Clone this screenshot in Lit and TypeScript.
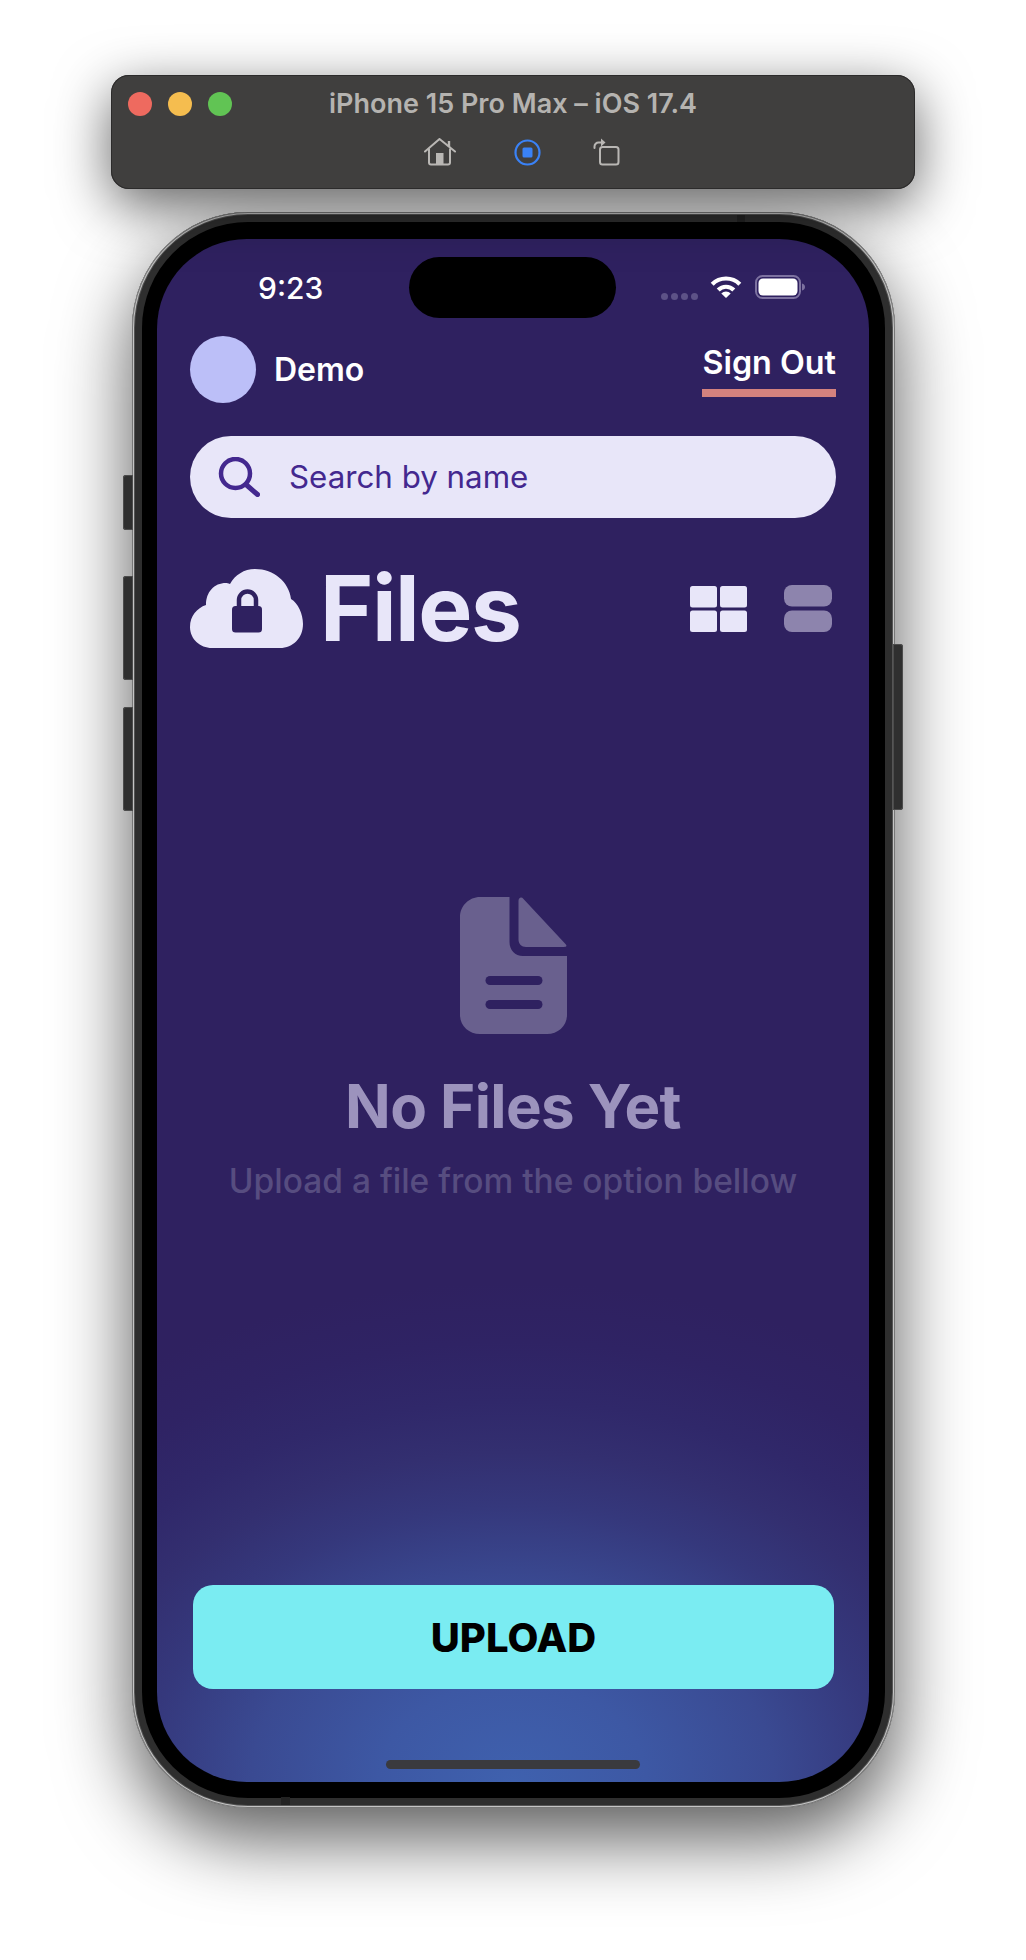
import { LitElement, html, css } from 'lit'
import { customElement } from 'lit/decorators.js'

const homeIcon = html`<svg width="32" height="28" viewBox="0 0 32 28" fill="none" stroke="#b9b7b4" stroke-width="2" stroke-linejoin="round">
  <path d="M1 13.5 15.5 1 31 13.5" stroke-linecap="round"/>
  <path d="M5 10.5V24.5a2 2 0 0 0 2 2H24a2 2 0 0 0 2-2V10.5"/>
  <path d="M25 3v6" stroke-width="2.4"/>
  <rect x="12" y="15" width="7.5" height="12" fill="#b9b7b4" stroke="none"/>
</svg>`

const recordIcon = html`<svg width="27" height="27" viewBox="0 0 27 27">
  <circle cx="13.5" cy="13.5" r="12" fill="none" stroke="#3a82f6" stroke-width="2.2"/>
  <rect x="8.5" y="8.5" width="10" height="10" rx="1.5" fill="#3a82f6"/>
</svg>`

const rotateIcon = html`<svg width="27" height="28" viewBox="0 0 27 28" fill="none" stroke="#b9b7b4" stroke-width="2">
  <rect x="7" y="9" width="18.5" height="17.5" rx="2.5"/>
  <path d="M1.5 10V8.5a4 4 0 0 1 4-4H9" stroke-linecap="round"/>
  <path d="M8 0.5 12.5 4.5 8 8.5Z" fill="#b9b7b4" stroke="none"/>
</svg>`

const wifiIcon = html`<svg width="32" height="22" viewBox="0 0 32 22" fill="none" stroke="#fff">
  <path d="M2.2 8.2A19.5 19.5 0 0 1 29.8 8.2" stroke-width="4.2"/>
  <path d="M8.2 14A11 11 0 0 1 23.8 14" stroke-width="4.2"/>
  <path d="M16 22 11.3 17.4A6.6 6.6 0 0 1 20.7 17.4Z" fill="#fff" stroke="none"/>
</svg>`

const batteryIcon = html`<svg width="50" height="24" viewBox="0 0 50 24">
  <rect x="1" y="1" width="44" height="22" rx="6.5" fill="none" stroke="#7d72a0" stroke-width="2"/>
  <rect x="3.5" y="3.5" width="39" height="17" rx="4.5" fill="#fff"/>
  <path d="M47 8.5c1.8.5 3 1.8 3 3.5s-1.200 3-3 3.500Z" fill="#7d72a0"/>
</svg>`

const searchIcon = html`<svg width="42" height="40" viewBox="0 0 42 40" fill="none" stroke="#43288f" stroke-linecap="round">
  <circle cx="17.500" cy="16.500" r="14.500" stroke-width="4.500"/>
  <path d="M28 27.500 39.500 37.500" stroke-width="5"/>
</svg>`

const cloudIcon = html`<svg width="113" height="79" viewBox="0 0 113 79">
  <path fill="#e8e6f9" d="M22 79C10 79 0 70 0 58C0 47 7 39 16 36C16 23 24 14 36 14C37 14 38 14 40 15C45 6 54 0 65 0C84 0 99 13 101 30C108 34 113 45 113 55C113 69 103 79 90 79Z"/>
  <path fill="none" stroke="#2f2160" stroke-width="4.500" d="M49 40V31a8.500 8.500 0 0 1 17 0V40"/>
  <rect x="42" y="37" width="30" height="26.500" rx="3.500" fill="#2f2160"/>
</svg>`

const gridIcon = html`<svg class="view-icon" width="57" height="46" viewBox="0 0 57 46" fill="#e8e6f9">
  <rect width="27" height="21.500" rx="2.500"/>
  <rect x="30" width="27" height="21.500" rx="2.500"/>
  <rect y="24.500" width="27" height="21.500" rx="2.500"/>
  <rect x="30" y="24.500" width="27" height="21.500" rx="2.500"/>
</svg>`

const listIcon = html`<svg class="view-icon" width="48" height="47" viewBox="0 0 48 47" fill="#8d84ad">
  <rect width="48" height="21.500" rx="8"/>
  <rect y="25.500" width="48" height="21.500" rx="8"/>
</svg>`

const fileIcon = html`<svg width="107" height="137" viewBox="0 0 107 137" fill="#69608e">
  <path d="M58.500 4C58.500 .5 61.500 -.5 63.500 2L105 46.500C107.500 49 106.500 50 104 50H66C61.500 50 58.500 47 58.500 42.500Z"/>
  <path d="M20 0H49.500V45C49.500 53 55 59 63 59H107V118C107 129 98 137 87 137H20C9 137 0 129 0 118V20C0 9 9 0 20 0Z"/>
  <rect x="25.500" y="79" width="57" height="9" rx="4.500" fill="#2f2160"/>
  <rect x="25.500" y="103" width="57" height="9" rx="4.500" fill="#2f2160"/>
</svg>`

@customElement('app-root')
export class AppRoot extends LitElement {
  static styles = css`
    :host {
      display: block;
      height: 1960px;
      overflow: hidden;
      background: #fff;
      font-family: Inter, 'Liberation Sans', sans-serif;
    }

    .page {
      display: flex;
      flex-direction: column;
      padding: 75px 0 0 111px;
      gap: 23px;
    }

    /* simulator window bar */
    .toolbar {
      box-sizing: border-box;
      width: 804px;
      height: 114px;
      position: relative;
      z-index: 1;
      display: flex;
      flex-direction: column;
      align-items: center;
      border-radius: 18px;
      background: #403f3e;
      box-shadow: inset 0 0 0 1px #2c2b2b, 0 16px 55px rgba(0, 0, 0, 0.62);
    }
    .lights {
      position: absolute;
      left: 17px;
      top: 17px;
      display: flex;
      gap: 16px;
    }
    .light {
      width: 24px;
      height: 24px;
      border-radius: 50%;
    }
    .title {
      margin-top: 14px;
      font-size: 27px;
      line-height: 30px;
      font-weight: 600;
      color: #b5b3b0;
      white-space: nowrap;
    }
    .tools {
      margin-top: 19px;
      padding-left: 17px;
      display: flex;
      align-items: center;
      gap: 58px;
    }
    .tools svg:last-child {
      margin-left: -6px;
    }

    /* device */
    .device {
      position: relative;
      box-sizing: border-box;
      width: 763px;
      height: 1596px;
      margin-left: 21px;
      padding: 10px;
      border-radius: 116px;
      background: #2e2e2e;
      box-shadow:
        inset 0 0 0 1px #777,
        inset 0 0 0 2px #c4c4c4,
        inset 0 0 0 3px #555,
        0 30px 75px rgba(0, 0, 0, 0.65);
    }
    .side {
      position: absolute;
      width: 10px;
      background: #2f2f2f;
      box-shadow: inset 0 0 0 1px #4c4c4c;
    }
    .side.left {
      left: -9px;
      border-radius: 3px 0 0 3px;
    }
    .side.right {
      right: -8px;
      border-radius: 0 3px 3px 0;
    }
    .band {
      position: absolute;
      background: #222;
    }
    .bezel {
      box-sizing: border-box;
      height: 100%;
      padding: 17px 16px 16px 15px;
      border-radius: 106px;
      background: #000;
    }
    .screen {
      position: relative;
      box-sizing: border-box;
      height: 100%;
      display: flex;
      flex-direction: column;
      padding: 18px 33px 93px;
      border-radius: 90px;
      overflow: hidden;
      background:
        radial-gradient(ellipse 670px 500px at 50% 100%, #3f61ae 0%, #3d58a4 20%, #3a4a92 39%, #35387c 55%, #332f70 66%, #30286a 76%, #2f2364 88%, #2f2160 100%),
        #2f2160;
    }

    /* status bar */
    .status {
      display: grid;
      grid-template-columns: 219px 207px 1fr;
      align-items: center;
      height: 61px;
    }
    .time {
      padding-left: 68px;
      font-size: 30px;
      font-weight: 500;
      color: #fff;
    }
    .island {
      height: 61px;
      border-radius: 31px;
      background: #000;
    }
    .status-right {
      display: flex;
      align-items: center;
      padding-left: 45px;
    }
    .dots {
      display: flex;
      gap: 3px;
      margin: 17px 12px 0 0;
    }
    .dots i {
      width: 7px;
      height: 7px;
      border-radius: 50%;
      background: #5d5287;
    }
    .wifi {
      display: flex;
      margin: -2px 13px 0 0;
    }
    .battery {
      display: flex;
      margin-top: -1px;
    }

    /* account row */
    .account {
      display: flex;
      justify-content: space-between;
      margin-top: 18px;
    }
    .user {
      display: flex;
      align-items: center;
      gap: 18px;
    }
    .avatar {
      width: 66px;
      height: 67px;
      border-radius: 50%;
      background: #bcbff8;
    }
    .name {
      font-size: 32px;
      font-weight: 600;
      color: #fff;
    }
    .sign-out {
      align-self: flex-start;
      margin-top: 7px;
      padding-bottom: 7px;
      border-bottom: 8px solid #d4827e;
      font-size: 32.300px;
      font-weight: 600;
      color: #fff;
    }

    .search {
      display: flex;
      align-items: center;
      gap: 29px;
      height: 82px;
      margin-top: 33px;
      padding-left: 28px;
      border-radius: 41px;
      background: #e8e6f9;
      font-size: 31.300px;
      color: #43288f;
    }
    .search svg {
      flex: none;
    }

    /* heading row */
    .heading {
      display: flex;
      align-items: center;
      height: 79px;
      margin-top: 51px;
    }
    .heading h1 {
      margin: 0 0 0 17px;
      font-size: 91px;
      line-height: 79px;
      font-weight: 700;
      letter-spacing: -1.500px;
      color: #e8e6f9;
    }
    .views {
      display: flex;
      align-items: center;
      gap: 37px;
      margin-left: auto;
      padding-right: 4px;
    }

    /* empty state */
    .empty {
      flex: 1;
      display: flex;
      flex-direction: column;
      align-items: center;
      padding-top: 249px;
    }
    .empty h2 {
      margin: 36px 0 0;
      font-size: 60px;
      line-height: 72px;
      font-weight: 700;
      letter-spacing: -0.600px;
      color: #9c93bd;
    }
    .empty p {
      margin: 19px 0 0;
      font-size: 33.500px;
      line-height: 40px;
      font-weight: 500;
      color: #574d80;
      white-space: nowrap;
    }

    .upload {
      display: flex;
      align-items: center;
      justify-content: center;
      height: 104px;
      margin: 0 2px 0 3px;
      border-radius: 20px;
      background: #7aecf2;
      font-size: 40px;
      font-weight: 800;
      color: #000;
    }

    .home-bar {
      position: absolute;
      left: 229px;
      bottom: 13px;
      width: 254px;
      height: 9px;
      border-radius: 5px;
      background: #3a3a3e;
    }
  `

  render() {
    return html`
      <div class="page">
        <div class="toolbar">
          <div class="lights">
            <span class="light" style="background:#ee6a5f"></span>
            <span class="light" style="background:#f5bd4f"></span>
            <span class="light" style="background:#61c454"></span>
          </div>
          <div class="title">iPhone 15 Pro Max – iOS 17.4</div>
          <div class="tools">${homeIcon}${recordIcon}${rotateIcon}</div>
        </div>

        <div class="device">
          <span class="side left" style="top:263px;height:55px"></span>
          <span class="side left" style="top:364px;height:104px"></span>
          <span class="side left" style="top:495px;height:104px"></span>
          <span class="side right" style="top:432px;height:166px"></span>
          <span class="band" style="left:605px;top:3px;width:8px;height:7px"></span>
          <span class="band" style="left:149px;bottom:3px;width:9px;height:8px"></span>

          <div class="bezel">
            <div class="screen">
              <div class="status">
                <div class="time">9:23</div>
                <div class="island"></div>
                <div class="status-right">
                  <div class="dots"><i></i><i></i><i></i><i></i></div>
                  <span class="wifi">${wifiIcon}</span>
                  <span class="battery">${batteryIcon}</span>
                </div>
              </div>

              <div class="account">
                <div class="user">
                  <div class="avatar"></div>
                  <div class="name">Demo</div>
                </div>
                <div class="sign-out">Sign Out</div>
              </div>

              <div class="search">${searchIcon}<span>Search by name</span></div>

              <div class="heading">
                ${cloudIcon}
                <h1>Files</h1>
                <div class="views">${gridIcon}${listIcon}</div>
              </div>

              <div class="empty">
                ${fileIcon}
                <h2>No Files Yet</h2>
                <p>Upload a file from the option bellow</p>
              </div>

              <div class="upload">UPLOAD</div>
              <div class="home-bar"></div>
            </div>
          </div>
        </div>
      </div>
    `
  }
}
